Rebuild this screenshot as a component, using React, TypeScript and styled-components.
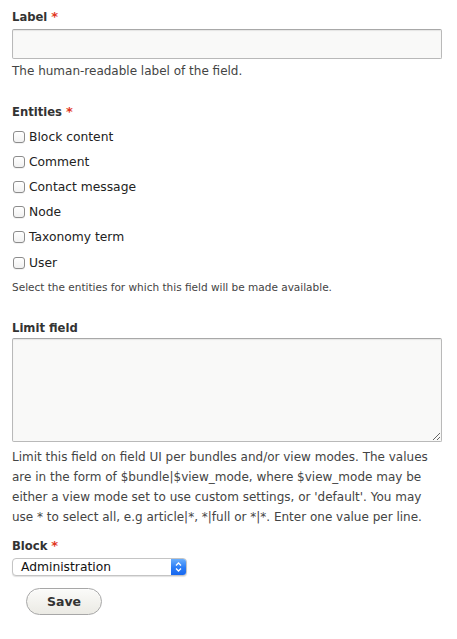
import React from "react";
import styled, { createGlobalStyle } from "styled-components";

const GlobalStyle = createGlobalStyle`
  html, body {
    margin: 0;
    padding: 0;
    background: #fff;
  }
  body {
    font-family: "DejaVu Sans", Verdana, sans-serif;
    color: #333;
  }
`;

const Form = styled.form`
  display: flex;
  flex-direction: column;
  padding: 9px 15px 0 12px;
  width: 430px;
`;

const FormItem = styled.div<{ $gap?: number }>`
  display: flex;
  flex-direction: column;
  margin-bottom: ${(p) => p.$gap ?? 0}px;
`;

const Label = styled.label<{ $mb?: number }>`
  font-size: 11.6px;
  font-weight: bold;
  line-height: 16px;
  color: #333;
  margin-bottom: ${(p) => p.$mb ?? 4}px;
`;

const Required = styled.span`
  color: #e1361e;
  margin-left: 4px;
  font-size: 13px;
`;

const TextInput = styled.input`
  box-sizing: border-box;
  width: 430px;
  height: 30px;
  margin: 0;
  border: 1px solid #b9b9b9;
  border-top-color: #a8a8a8;
  border-radius: 2px;
  background: #f9f9f8;
  box-shadow: inset 0 1px 1px rgba(0, 0, 0, 0.08);
  font: 12px "DejaVu Sans", sans-serif;
  outline: none;
`;

const Description = styled.div<{ $size?: number; $lh?: number; $mt?: number }>`
  font-size: ${(p) => p.$size ?? 12}px;
  line-height: ${(p) => p.$lh ?? 16}px;
  color: #444;
  margin-top: ${(p) => p.$mt ?? 4}px;
`;

const Checkboxes = styled.div`
  display: flex;
  flex-direction: column;
`;

const CheckRow = styled.label`
  display: flex;
  align-items: center;
  height: 25.2px;
  font-size: 12.3px;
  color: #222;
`;

const Box = styled.span`
  box-sizing: border-box;
  width: 12px;
  height: 12px;
  margin: 0 4px 0 1px;
  border: 1px solid #8c8c8c;
  border-radius: 3px;
  background: linear-gradient(#ffffff, #f1f1f1);
  box-shadow: 0 1px 0 rgba(0, 0, 0, 0.05);
`;

const TextArea = styled.textarea`
  box-sizing: border-box;
  width: 430px;
  height: 104px;
  margin: 0;
  border: 1px solid #b9b9b9;
  border-top-color: #a8a8a8;
  border-radius: 2px;
  background: #f9f9f8;
  box-shadow: inset 0 1px 1px rgba(0, 0, 0, 0.08);
  resize: vertical;
  outline: none;
  display: block;
`;

const SelectBox = styled.div`
  box-sizing: border-box;
  display: flex;
  align-items: stretch;
  width: 175px;
  height: 18px;
  border: 1px solid #c4c4c4;
  border-radius: 4px;
  background: #fff;
  box-shadow: 0 1px 1px rgba(0, 0, 0, 0.12);
  overflow: hidden;
`;

const SelectText = styled.span`
  flex: 1;
  padding-left: 8px;
  font-size: 12.3px;
  line-height: 16px;
  color: #111;
`;

const Stepper = styled.span`
  display: flex;
  align-items: center;
  justify-content: center;
  width: 15px;
  background: linear-gradient(#6aaefc, #2a7cf6 55%, #1767ef);
`;

const Actions = styled.div`
  display: flex;
  padding: 12px 0 0 14px;
`;

const SaveButton = styled.button`
  box-sizing: border-box;
  width: 76px;
  height: 27px;
  border: 1px solid #a7a7a7;
  border-radius: 14px;
  background: linear-gradient(#fbfbf9, #ebeae4);
  color: #333;
  font: bold 12.5px "DejaVu Sans", sans-serif;
  padding: 0;
  box-shadow: 0 1px 0 rgba(255, 255, 255, 0.6) inset;
`;

const entities = [
  "Block content",
  "Comment",
  "Contact message",
  "Node",
  "Taxonomy term",
  "User",
];

export default function App() {
  return (
    <>
      <GlobalStyle />
      <Form onSubmit={(e) => e.preventDefault()}>
        <FormItem $gap={25}>
          <Label>
            Label<Required>*</Required>
          </Label>
          <TextInput type="text" />
          <Description>The human-readable label of the field.</Description>
        </FormItem>

        <FormItem $gap={25}>
          <Label>
            Entities<Required>*</Required>
          </Label>
          <Checkboxes>
            {entities.map((name) => (
              <CheckRow key={name}>
                <Box />
                {name}
              </CheckRow>
            ))}
          </Checkboxes>
          <Description $size={10.5}>
            Select the entities for which this field will be made available.
          </Description>
        </FormItem>

        <FormItem $gap={11}>
          <Label $mb={2}>Limit field</Label>
          <TextArea />
          <Description $lh={20} $mt={5}>
            Limit this field on field UI per bundles and/or view modes. The
            values are in the form of $bundle|$view_mode, where $view_mode may
            be either a view mode set to use custom settings, or 'default'. You
            may use * to select all, e.g article|*, *|full or *|*. Enter one
            value per line.
          </Description>
        </FormItem>

        <FormItem>
          <Label>
            Block<Required>*</Required>
          </Label>
          <SelectBox>
            <SelectText>Administration</SelectText>
            <Stepper>
              <svg width="7" height="12" viewBox="0 0 7 12">
                <path
                  d="M1 4.5 L3.5 2 L6 4.5 M1 7.5 L3.5 10 L6 7.5"
                  fill="none"
                  stroke="#fff"
                  strokeWidth="1.3"
                />
              </svg>
            </Stepper>
          </SelectBox>
        </FormItem>

        <Actions>
          <SaveButton type="submit">Save</SaveButton>
        </Actions>
      </Form>
    </>
  );
}
